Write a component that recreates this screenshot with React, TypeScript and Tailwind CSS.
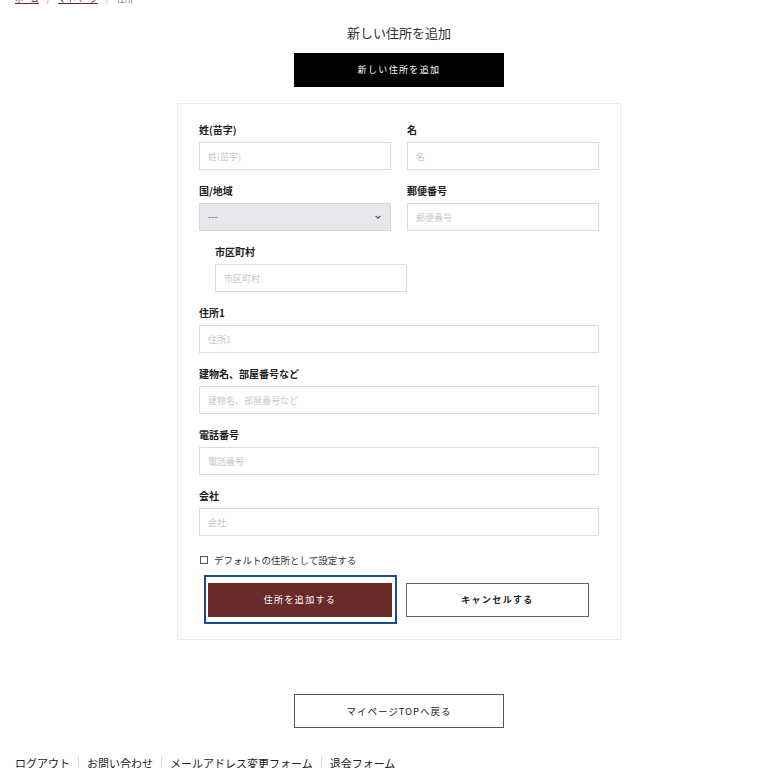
const FONT = "font-['Noto_Sans_CJK_JP','Noto_Sans',sans-serif]";

function Field({
  label,
  placeholder,
  className = "",
}: {
  label: string;
  placeholder: string;
  className?: string;
}) {
  return (
    <div className={className}>
      <label className="block h-[14px] text-[10px] font-bold leading-[14px] text-[#222]">
        {label}
      </label>
      <input
        placeholder={placeholder}
        className="mt-[5px] block h-[28px] w-full border border-[#dcdcdc] bg-white px-[8px] text-[9px] text-[#333] outline-none placeholder:text-[#c8c8c8]"
      />
    </div>
  );
}

export default function App() {
  return (
    <div className={`${FONT} min-h-[768px] overflow-hidden bg-white pl-[15px] text-[#333]`}>
      {/* パンくず（上が切れている） */}
      <nav className="-mt-[7px] flex h-[12px] items-center gap-[8px] text-[8px] leading-[12px]">
        <a className="text-[#6b2a2a] underline underline-offset-1">ホーム</a>
        <span className="text-[#888]">/</span>
        <a className="text-[#6b2a2a] underline underline-offset-1">マイページ</a>
        <span className="text-[#888]">/</span>
        <span className="text-[#666]">住所</span>
      </nav>

      <main className="flex flex-col items-center pl-[15px]">
        <h1 className="mt-[18px] h-[20px] text-[13px] leading-[20px] text-[#333]">
          新しい住所を追加
        </h1>
        <button className="mt-[10px] h-[34px] w-[210px] bg-black text-[9px] tracking-[0.15em] text-white">
          新しい住所を追加
        </button>

        {/* フォーム */}
        <div className="mt-[16px] w-[444px] border border-[#ececec] px-[21px] pb-[15px] pt-[19px]">
          <div className="flex flex-col gap-[14px]">
            <div className="grid grid-cols-2 gap-x-[16px]">
              <Field label="姓(苗字)" placeholder="姓(苗字)" />
              <Field label="名" placeholder="名" />
            </div>
            <div className="grid grid-cols-2 gap-x-[16px]">
              <div>
                <label className="block h-[14px] text-[10px] font-bold leading-[14px] text-[#222]">
                  国/地域
                </label>
                <div className="mt-[5px] flex h-[28px] items-center justify-between border border-[#d8d8dc] bg-[#e8e8ec] px-[8px] text-[9px] text-[#555]">
                  <span>---</span>
                  <svg width="8" height="8" viewBox="0 0 10 10" fill="none" stroke="#555" strokeWidth="1.5">
                    <path d="M2 3.5l3 3 3-3" />
                  </svg>
                </div>
              </div>
              <Field label="郵便番号" placeholder="郵便番号" />
            </div>
            <div className="grid grid-cols-2 gap-x-[16px]">
              <Field label="市区町村" placeholder="市区町村" className="ml-[16px] w-[192px]" />
            </div>
            <Field label="住所1" placeholder="住所1" />
            <Field label="建物名、部屋番号など" placeholder="建物名、部屋番号など" />
            <Field label="電話番号" placeholder="電話番号" />
            <Field label="会社" placeholder="会社" />
          </div>

          <label className="mt-[17px] flex h-[14px] items-center gap-[6px] text-[9.5px] leading-[14px] text-[#333]">
            <span className="ml-[1px] h-[8px] w-[8px] border border-[#555] bg-white" />
            デフォルトの住所として設定する
          </label>

          <div className="mt-[8px] flex items-center gap-[9px]">
            <div className="ml-[5px] border-2 border-[#1b4b9b] pb-[5px] pl-[2px] pr-[3px] pt-[6px]">
              <button className="block h-[34px] w-[184px] bg-[#6b2a2a] text-[9px] tracking-[0.15em] text-white">
                住所を追加する
              </button>
            </div>
            <button className="h-[34px] w-[183px] border border-[#666] bg-white text-[9px] font-bold tracking-[0.15em] text-[#222]">
              キャンセルする
            </button>
          </div>
        </div>

        <button className="mt-[54px] h-[34px] w-[210px] border border-[#555] bg-white text-[9.5px] tracking-[0.1em] text-[#222]">
          マイページTOPへ戻る
        </button>
      </main>

      {/* フッターリンク */}
      <div className="mt-[28px] flex h-[14px] items-center text-[11px] leading-[14px] text-[#222]">
        <a className="pr-[8px] underline decoration-[#888] underline-offset-2">ログアウト</a>
        <a className="border-l border-[#ddd] px-[8px] underline decoration-[#888] underline-offset-2">お問い合わせ</a>
        <a className="border-l border-[#ddd] px-[8px] underline decoration-[#888] underline-offset-2">メールアドレス変更フォーム</a>
        <a className="border-l border-[#ddd] px-[8px] underline decoration-[#888] underline-offset-2">退会フォーム</a>
      </div>
    </div>
  );
}
